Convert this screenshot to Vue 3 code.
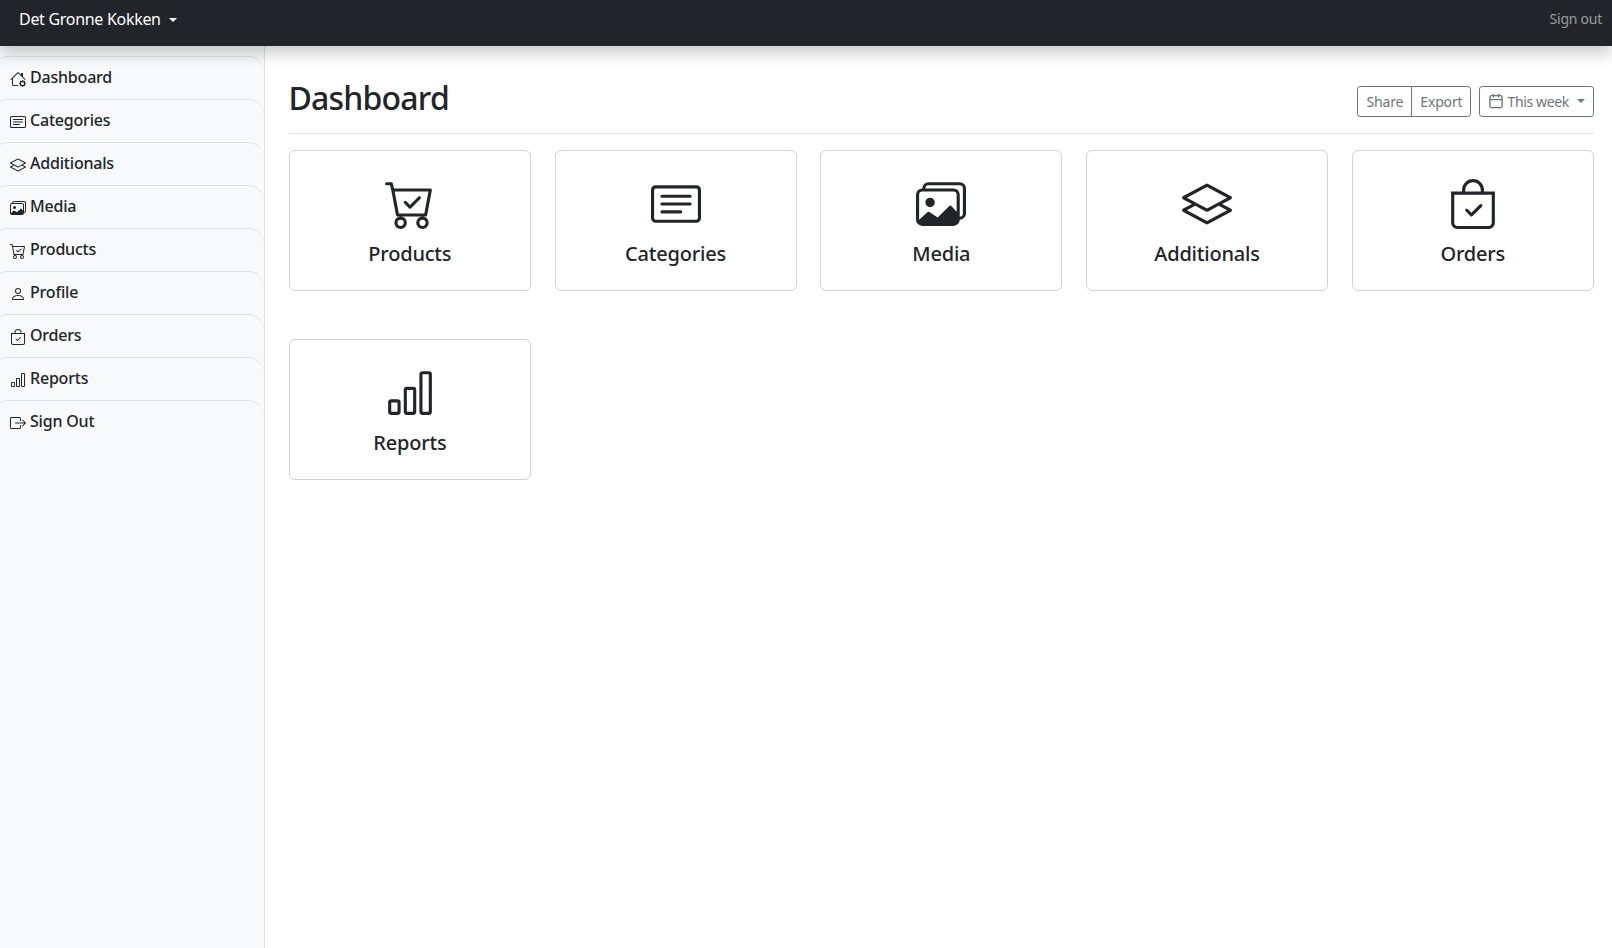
<script setup>
const icons = {
  house: [
    "M7.293 1.5a1 1 0 0 1 1.414 0L11 3.793V2.5a.5.5 0 0 1 .5-.5h1a.5.5 0 0 1 .5.5v3.293l2.354 2.353a.5.5 0 0 1-.708.708L8 2.207l-5 5V13.5a.5.5 0 0 0 .5.5h4a.5.5 0 0 1 0 1h-4A1.5 1.5 0 0 1 2 13.5V8.207l-.646.647a.5.5 0 1 1-.708-.708L7.293 1.5Z",
    "M11.886 9.46c.18-.613 1.048-.613 1.229 0l.043.148a.64.64 0 0 0 .921.382l.136-.074c.561-.306 1.175.308.87.869l-.075.136a.64.64 0 0 0 .382.92l.149.045c.612.18.612 1.048 0 1.229l-.15.043a.64.64 0 0 0-.38.921l.074.136c.305.561-.309 1.175-.87.87l-.136-.075a.64.64 0 0 0-.92.382l-.045.149c-.18.612-1.048.612-1.229 0l-.043-.15a.64.64 0 0 0-.921-.38l-.136.074c-.561.305-1.175-.309-.87-.87l.075-.136a.64.64 0 0 0-.382-.92l-.148-.045c-.613-.18-.613-1.048 0-1.229l.148-.043a.64.64 0 0 0 .382-.921l-.074-.136c-.306-.561.308-1.175.869-.87l.136.075a.64.64 0 0 0 .92-.382l.045-.149ZM14 12.5a1.5 1.5 0 1 0-3 0 1.5 1.5 0 0 0 3 0Z"
  ],
  card: [
    "M14.5 3a.5.5 0 0 1 .5.5v9a.5.5 0 0 1-.5.5h-13a.5.5 0 0 1-.5-.5v-9a.5.5 0 0 1 .5-.5h13zm-13-1A1.5 1.5 0 0 0 0 3.5v9A1.5 1.5 0 0 0 1.5 14h13a1.5 1.5 0 0 0 1.5-1.5v-9A1.5 1.5 0 0 0 14.5 2h-13z",
    "M3 5.5a.5.5 0 0 1 .5-.5h9a.5.5 0 0 1 0 1h-9a.5.5 0 0 1-.5-.5zM3 8a.5.5 0 0 1 .5-.5h9a.5.5 0 0 1 0 1h-9A.5.5 0 0 1 3 8zm0 2.5a.5.5 0 0 1 .5-.5h6a.5.5 0 0 1 0 1h-6a.5.5 0 0 1-.5-.5z"
  ],
  layers: [
    "M8.235 1.559a.5.5 0 0 0-.47 0l-7.5 4a.5.5 0 0 0 0 .882L3.188 8 .264 9.559a.5.5 0 0 0 0 .882l7.5 4a.5.5 0 0 0 .47 0l7.5-4a.5.5 0 0 0 0-.882L12.813 8l2.922-1.559a.5.5 0 0 0 0-.882l-7.5-4zm3.515 7.008L14.438 10 8 13.433 1.562 10 4.25 8.567l3.515 1.874a.5.5 0 0 0 .47 0l3.515-1.874zM8 9.433 1.562 6 8 2.567 14.438 6 8 9.433z"
  ],
  images: [
    "M4.502 9a1.5 1.5 0 1 0 0-3 1.5 1.5 0 0 0 0 3z",
    "M14.002 13a2 2 0 0 1-2 2h-10a2 2 0 0 1-2-2V5A2 2 0 0 1 2 3a2 2 0 0 1 2-2h10a2 2 0 0 1 2 2v8a2 2 0 0 1-1.998 2zM14 2H4a1 1 0 0 0-1 1h9.002a2 2 0 0 1 2 2v7A1 1 0 0 0 15 11V3a1 1 0 0 0-1-1zM2.002 4a1 1 0 0 0-1 1v8l2.646-2.354a.5.5 0 0 1 .63-.062l2.66 1.773 3.71-3.71a.5.5 0 0 1 .577-.094l1.777 1.947V5a1 1 0 0 0-1-1h-10z"
  ],
  cart: [
    "M11.354 6.354a.5.5 0 0 0-.708-.708L8 8.293 6.854 7.146a.5.5 0 1 0-.708.708l1.5 1.5a.5.5 0 0 0 .708 0l3-3z",
    "M.5 1a.5.5 0 0 0 0 1h1.11l.401 1.607 1.498 7.985A.5.5 0 0 0 4 12h1a2 2 0 1 0 0 4 2 2 0 0 0 0-4h7a2 2 0 1 0 0 4 2 2 0 0 0 0-4h1a.5.5 0 0 0 .491-.408l1.5-8A.5.5 0 0 0 14.5 3H2.89l-.405-1.621A.5.5 0 0 0 2 1H.5zm3.915 10L3.102 4h10.796l-1.313 7h-8.17zM6 14a1 1 0 1 1-2 0 1 1 0 0 1 2 0zm7 0a1 1 0 1 1-2 0 1 1 0 0 1 2 0z"
  ],
  person: [
    "M8 8a3 3 0 1 0 0-6 3 3 0 0 0 0 6Zm2-3a2 2 0 1 1-4 0 2 2 0 0 1 4 0Zm4 8c0 1-1 1-1 1H3s-1 0-1-1 1-4 6-4 6 3 6 4Zm-1-.004c-.001-.246-.154-.986-.832-1.664C11.516 10.68 10.289 10 8 10c-2.29 0-3.516.68-4.168 1.332-.678.678-.83 1.418-.832 1.664h10Z"
  ],
  bag: [
    "M10.854 8.146a.5.5 0 0 1 0 .708l-3 3a.5.5 0 0 1-.708 0l-1.5-1.5a.5.5 0 0 1 .708-.708L7.5 10.793l2.646-2.647a.5.5 0 0 1 .708 0z",
    "M8 1a2.5 2.5 0 0 1 2.5 2.5V4h-5v-.5A2.5 2.5 0 0 1 8 1zm3.5 3v-.5a3.5 3.5 0 1 0-7 0V4H1v10a2 2 0 0 0 2 2h10a2 2 0 0 0 2-2V4h-3.5zM2 5h12v9a1 1 0 0 1-1 1H3a1 1 0 0 1-1-1V5z"
  ],
  chart: [
    "M4 11H2v3h2v-3zm5-4H7v7h2V7zm5-5v12h-2V2h2zm-2-1a1 1 0 0 0-1 1v12a1 1 0 0 0 1 1h2a1 1 0 0 0 1-1V2a1 1 0 0 0-1-1h-2zM6 7a1 1 0 0 1 1-1h2a1 1 0 0 1 1 1v7a1 1 0 0 1-1 1H7a1 1 0 0 1-1-1V7zm-5 4a1 1 0 0 1 1-1h2a1 1 0 0 1 1 1v3a1 1 0 0 1-1 1H2a1 1 0 0 1-1-1v-3z"
  ],
  signout: [
    "M10 12.5a.5.5 0 0 1-.5.5h-8a.5.5 0 0 1-.5-.5v-9a.5.5 0 0 1 .5-.5h8a.5.5 0 0 1 .5.5v2a.5.5 0 0 0 1 0v-2A1.5 1.5 0 0 0 9.5 2h-8A1.5 1.5 0 0 0 0 3.5v9A1.5 1.5 0 0 0 1.5 14h8a1.5 1.5 0 0 0 1.5-1.5v-2a.5.5 0 0 0-1 0v2z",
    "M15.854 8.354a.5.5 0 0 0 0-.708l-3-3a.5.5 0 0 0-.708.708L14.293 7.5H5.5a.5.5 0 0 0 0 1h8.793l-2.147 2.146a.5.5 0 0 0 .708.708l3-3z"
  ]
};

const menu = [
  { label: "Dashboard", icon: "house" },
  { label: "Categories", icon: "card" },
  { label: "Additionals", icon: "layers" },
  { label: "Media", icon: "images" },
  { label: "Products", icon: "cart" },
  { label: "Profile", icon: "person" },
  { label: "Orders", icon: "bag" },
  { label: "Reports", icon: "chart" },
  { label: "Sign Out", icon: "signout" }
];

const cards = [
  { label: "Products", icon: "cart" },
  { label: "Categories", icon: "card" },
  { label: "Media", icon: "images" },
  { label: "Additionals", icon: "layers" },
  { label: "Orders", icon: "bag" },
  { label: "Reports", icon: "chart" }
];
</script>

<template>
  <div class="page">
    <header class="navbar">
      <a class="brand" href="#">Det Gronne Kokken<span class="caret brand-caret"></span></a>
      <a class="signout" href="#">Sign out</a>
    </header>
    <div class="body">
      <nav class="sidebar">
        <a v-for="item in menu" :key="item.label" class="menu-item" href="#">
          <svg class="menu-icon" viewBox="0 0 16 16" fill="currentColor">
            <path v-for="d in icons[item.icon]" :key="d" :d="d" />
          </svg>
          <span>{{ item.label }}</span>
        </a>
      </nav>
      <main class="main">
        <div class="head">
          <h1>Dashboard</h1>
          <div class="toolbar">
            <div class="btn-group">
              <button class="btn">Share</button>
              <button class="btn">Export</button>
            </div>
            <button class="btn week">
              <svg class="calendar" viewBox="0 0 24 24" fill="none" stroke="currentColor" stroke-width="2" stroke-linecap="round" stroke-linejoin="round">
                <rect x="3" y="4" width="18" height="18" rx="2" ry="2" />
                <line x1="16" y1="2" x2="16" y2="6" />
                <line x1="8" y1="2" x2="8" y2="6" />
                <line x1="3" y1="10" x2="21" y2="10" />
              </svg>
              This week<span class="caret"></span>
            </button>
          </div>
        </div>
        <div class="cards">
          <a v-for="card in cards" :key="card.label" class="card" href="#">
            <svg class="card-icon" viewBox="0 0 16 16" fill="currentColor">
              <path v-for="d in icons[card.icon]" :key="d" :d="d" />
            </svg>
            <span>{{ card.label }}</span>
          </a>
        </div>
      </main>
    </div>
  </div>
</template>

<style>
html,
body {
  margin: 0;
  background: #fff;
}
</style>

<style scoped>
.page {
  display: flex;
  flex-direction: column;
  min-height: 948px;
  font-family: "Noto Sans", "Open Sans", sans-serif;
  color: #212529;
  overflow: hidden;
}
a {
  text-decoration: none;
  color: inherit;
}
.navbar {
  display: flex;
  justify-content: space-between;
  align-items: flex-start;
  height: 46px;
  box-sizing: border-box;
  padding: 7px 10px 0 19px;
  background: #212529;
  box-shadow: 0 8px 16px rgba(0, 0, 0, 0.2);
  position: relative;
  z-index: 2;
}
.brand {
  font-size: 16px;
  line-height: 24px;
  letter-spacing: -0.3px;
  color: #fff;
}
.caret {
  display: inline-block;
  margin-left: 8px;
  vertical-align: 3px;
  border-top: 4.2px solid currentColor;
  border-left: 4.2px solid transparent;
  border-right: 4.2px solid transparent;
}
.signout {
  font-size: 14px;
  line-height: 24px;
  letter-spacing: -0.25px;
  color: rgba(255, 255, 255, 0.55);
}
.body {
  display: flex;
  flex: 1;
}
.sidebar {
  width: 265px;
  flex-shrink: 0;
  box-sizing: border-box;
  padding-top: 10px;
  background: #f8f9fa;
  box-shadow: inset -1px 0 0 rgba(0, 0, 0, 0.1);
}
.menu-item {
  display: flex;
  align-items: flex-start;
  gap: 4px;
  height: 43px;
  box-sizing: border-box;
  width: 272px;
  margin-left: -8px;
  padding: 8px 0 0 18px;
  border-top: 1px solid #dee2e6;
  border-radius: 16px 16px 0 0;
  font-size: 16px;
  line-height: 24px;
  font-weight: 500;
  letter-spacing: -0.2px;
}
.menu-icon {
  width: 16px;
  height: 16px;
  margin-top: 6px;
  flex-shrink: 0;
}
.main {
  flex: 1;
  min-width: 0;
  padding: 33px 18px 0 23.9px;
}
.head {
  display: flex;
  justify-content: space-between;
  align-items: center;
  padding-bottom: 8px;
  margin-bottom: 16px;
  border-bottom: 1px solid #dee2e6;
}
h1 {
  margin: 0 0 8px -0.5px;
  font-size: 32px;
  line-height: 38.4px;
  font-weight: 500;
  letter-spacing: -0.8px;
}
.toolbar {
  display: flex;
  gap: 8px;
  margin-bottom: 2px;
}
.btn-group {
  display: flex;
}
.btn {
  height: 31px;
  padding: 0 8px;
  box-sizing: border-box;
  border: 1px solid #6c757d;
  background: transparent;
  color: #6c757d;
  font-family: inherit;
  font-size: 14px;
  line-height: 21px;
  letter-spacing: -0.15px;
  border-radius: 3.2px;
}
.btn-group .btn:first-child {
  border-radius: 3.2px 0 0 3.2px;
}
.btn-group .btn:last-child {
  margin-left: -1px;
  border-radius: 0 3.2px 3.2px 0;
}
.week {
  display: flex;
  align-items: center;
  letter-spacing: -0.35px;
}
.calendar {
  width: 16px;
  height: 16px;
  margin-right: 3px;
}
.cards {
  display: grid;
  grid-template-columns: repeat(5, 241.9px);
  gap: 48px 23.85px;
}
.card {
  display: flex;
  flex-direction: column;
  align-items: center;
  height: 141px;
  box-sizing: border-box;
  padding-top: 28px;
  border: 1px solid rgba(0, 0, 0, 0.175);
  border-radius: 6px;
  font-size: 20px;
  line-height: 30px;
  font-weight: 500;
  letter-spacing: -0.2px;
}
.card-icon {
  width: 50px;
  height: 50px;
  margin-bottom: 10px;
}
</style>
